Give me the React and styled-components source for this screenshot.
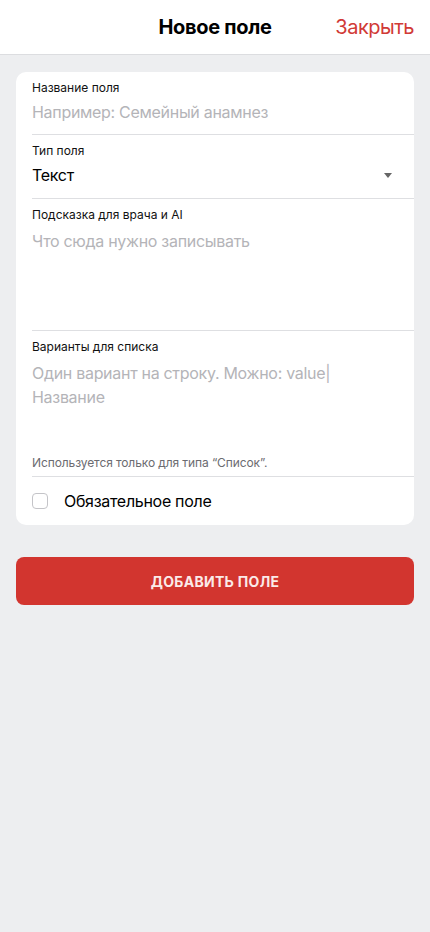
import React from 'react'
import styled, { createGlobalStyle } from 'styled-components'

const GlobalStyle = createGlobalStyle`
  html, body {
    margin: 0;
    padding: 0;
    background: #edeef0;
    font-family: Inter, "Noto Sans", "Liberation Sans", sans-serif;
  }
`

const Page = styled.div`
  min-height: 932px;
  background: #edeef0;
`

const Header = styled.header`
  height: 54px;
  background: #fff;
  border-bottom: 1px solid #dcdde0;
  display: grid;
  grid-template-columns: 1fr auto 1fr;
  align-items: center;
  padding: 0 16px;
`

const Title = styled.h1`
  margin: 0;
  font-size: 20px;
  font-weight: 700;
  letter-spacing: -0.3px;
  color: #000;
  grid-column: 2;
`

const CloseBtn = styled.button`
  justify-self: end;
  border: 0;
  background: none;
  padding: 0;
  font: inherit;
  font-size: 20px;
  letter-spacing: -0.5px;
  color: #d13a36;
`

const Content = styled.main`
  padding: 17px 16px;
  display: flex;
  flex-direction: column;
  gap: 32px;
`

const Card = styled.section`
  background: #fff;
  border-radius: 10px;
  padding-left: 16px;
`

const Field = styled.div`
  padding: 8px 16px 0 0;
  min-height: ${p => p.$h}px;
  box-sizing: border-box;
  border-bottom: ${p => (p.$last ? 'none' : '1px solid #dedfe2')};
  display: flex;
  flex-direction: column;
`

const Label = styled.div`
  font-size: 12px;
  line-height: 16px;
  color: #111;
`

const Placeholder = styled.div`
  font-size: 16px;
  line-height: 24px;
  letter-spacing: -0.3px;
  color: #b4b4b8;
  margin-top: ${p => (p.$area ? 6 : 4)}px;
`

const SelectRow = styled.div`
  display: flex;
  align-items: center;
  justify-content: space-between;
  margin-top: 4px;
  padding-right: 6px;
`

const Value = styled.span`
  font-size: 16px;
  line-height: 24px;
  letter-spacing: -0.3px;
  color: #000;
`

const Caret = styled.span`
  width: 0;
  height: 0;
  border-left: 4px solid transparent;
  border-right: 4px solid transparent;
  border-top: 5px solid #666;
`

const Hint = styled.div`
  margin-top: auto;
  padding-bottom: 6px;
  font-size: 12px;
  line-height: 14px;
  letter-spacing: -0.1px;
  color: #6b6b70;
`

const CheckRow = styled.label`
  display: flex;
  align-items: center;
  gap: 16px;
  height: 48px;
`

const Box = styled.span`
  width: 14px;
  height: 14px;
  border: 1px solid #c4c4c8;
  border-radius: 4px;
`

const CheckText = styled.span`
  font-size: 16px;
  letter-spacing: -0.3px;
  color: #000;
`

const Submit = styled.button`
  height: 48px;
  border: 0;
  border-radius: 8px;
  background: #d2352f;
  color: #fbeae9;
  font: inherit;
  font-size: 14px;
  font-weight: 700;
  letter-spacing: 0.3px;
`

export default function App() {
  return (
    <Page>
      <GlobalStyle />
      <Header>
        <Title>Новое поле</Title>
        <CloseBtn>Закрыть</CloseBtn>
      </Header>
      <Content>
        <Card>
          <Field $h={63}>
            <Label>Название поля</Label>
            <Placeholder>Например: Семейный анамнез</Placeholder>
          </Field>
          <Field $h={64}>
            <Label>Тип поля</Label>
            <SelectRow>
              <Value>Текст</Value>
              <Caret />
            </SelectRow>
          </Field>
          <Field $h={132}>
            <Label>Подсказка для врача и AI</Label>
            <Placeholder $area>Что сюда нужно записывать</Placeholder>
          </Field>
          <Field $h={146}>
            <Label>Варианты для списка</Label>
            <Placeholder $area>Один вариант на строку. Можно: value|<br />Название</Placeholder>
            <Hint>Используется только для типа “Список”.</Hint>
          </Field>
          <CheckRow>
            <Box />
            <CheckText>Обязательное поле</CheckText>
          </CheckRow>
        </Card>
        <Submit>ДОБАВИТЬ ПОЛЕ</Submit>
      </Content>
    </Page>
  )
}
